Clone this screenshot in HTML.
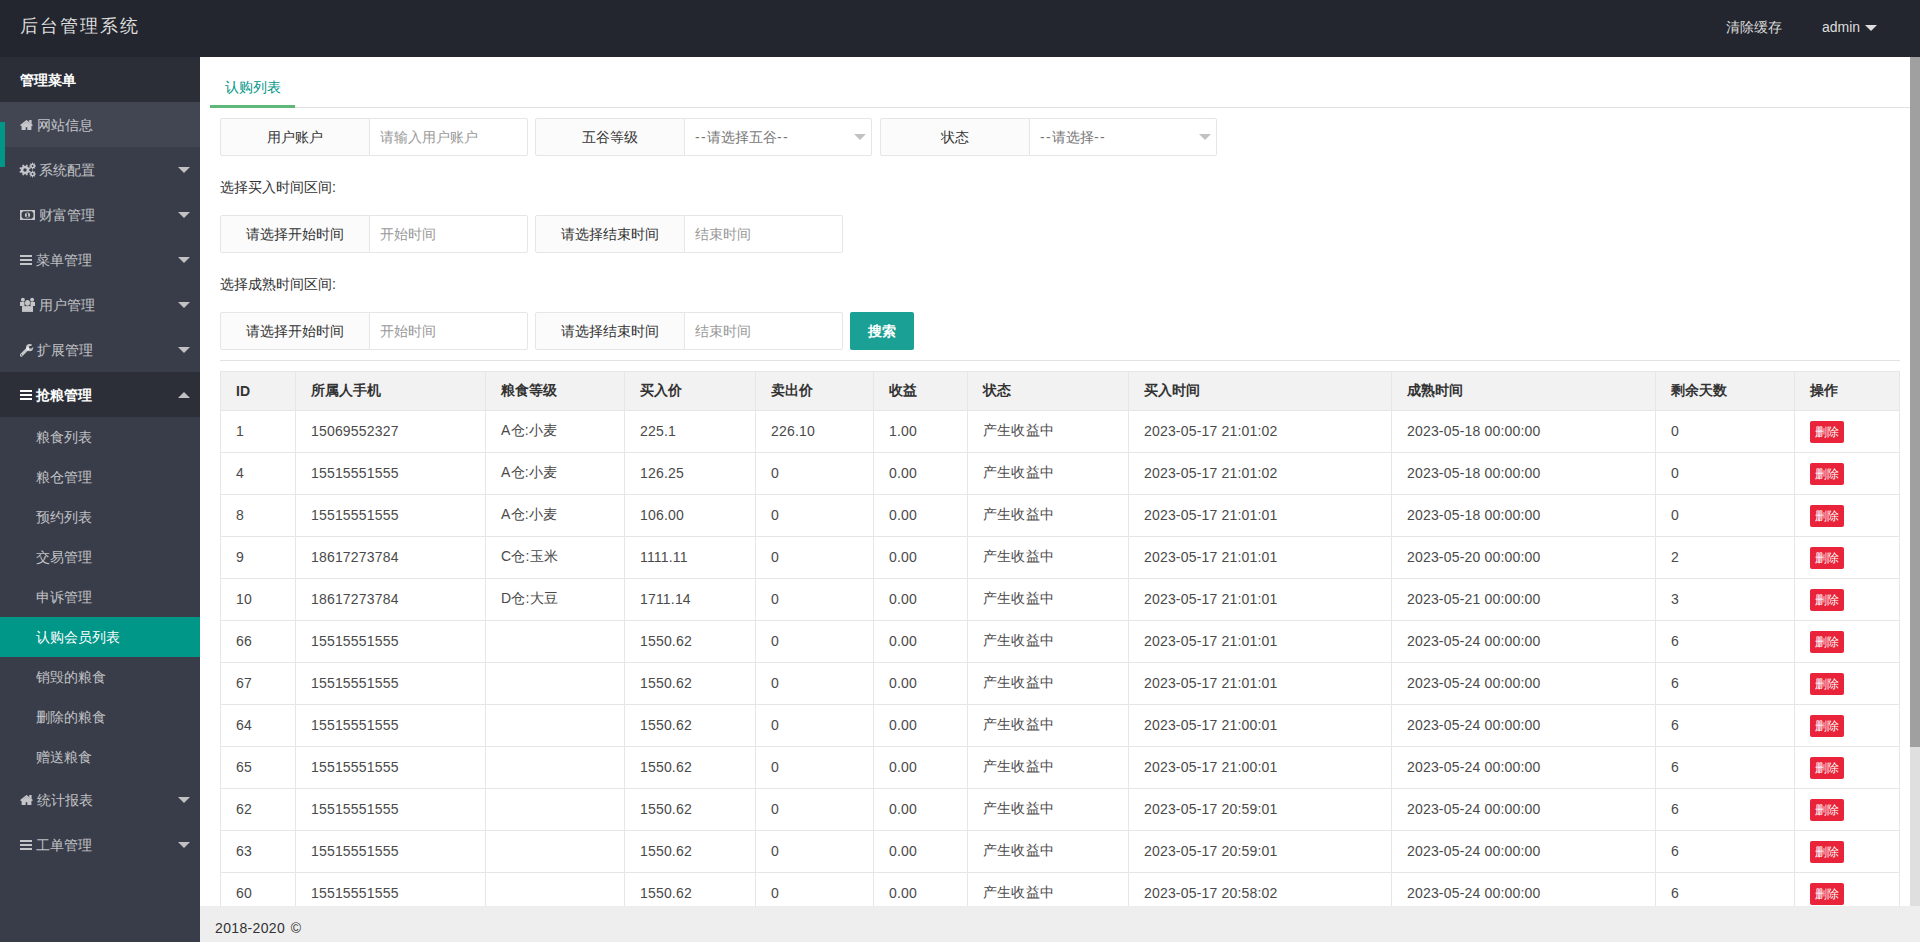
<!DOCTYPE html>
<html><head><meta charset="utf-8"><title>后台管理系统</title>
<style>
*{margin:0;padding:0;box-sizing:border-box}
html,body{width:1920px;height:942px;overflow:hidden;background:#fff;font-family:"Liberation Sans",sans-serif;font-size:14px;color:#333}
.hdr{position:absolute;left:0;top:0;width:1920px;height:57px;background:#23262E}
.logo{position:absolute;left:20px;top:14px;font-size:18px;letter-spacing:2px;color:#ddd;line-height:24px;white-space:nowrap}
.hr1{position:absolute;left:1726px;top:17px;color:#ddd;line-height:20px}
.hr2{position:absolute;left:1822px;top:17px;color:#ddd;line-height:20px}
.tri{position:absolute;width:0;height:0;border-style:solid;border-width:6px 6px 0 6px;border-color:#c2c2c2 transparent transparent transparent}
.side{position:absolute;left:0;top:57px;width:200px;height:885px;background:#393D49}
.st{position:absolute;line-height:20px;color:rgba(255,255,255,.7);white-space:nowrap}
.sidec{position:absolute;left:0;top:0;width:200px;height:942px}
.side .it{position:absolute;left:0;width:199px;height:45px;line-height:45px;color:rgba(255,255,255,.7);padding-left:20px;white-space:nowrap}
.side .ch{position:absolute;left:0;width:199px;height:40px;line-height:40px;color:rgba(255,255,255,.7);padding-left:36px;white-space:nowrap}
.side .ic{display:inline-block;width:16px;vertical-align:middle}
.main{position:absolute;left:200px;top:57px;width:1710px;height:849px;background:#fff}
.foot{position:absolute;left:200px;top:906px;width:1720px;height:36px;background:#eee}
.sb{position:absolute;left:1910px;top:57px;width:10px;height:849px;background:#dfdfdf}
.sbt{position:absolute;left:1910px;top:57px;width:10px;height:690px;background:#a0a0a0}
.fl{position:absolute;height:38px;border:1px solid #e6e6e6;background:#FBFBFB;text-align:center;line-height:36px;color:#333;border-radius:2px 0 0 2px}
.fi{position:absolute;height:38px;border:1px solid #e6e6e6;background:#fff;line-height:36px;color:#999;padding-left:10px;border-radius:0 2px 2px 0}
.ds{letter-spacing:1.3px}
.lbl{position:absolute;left:220px;line-height:20px;color:#333}
.tbl{position:absolute;left:0;top:0;width:1910px;height:906px;overflow:hidden}
.mainc{position:absolute;left:0;top:0;width:1920px;height:942px;white-space:nowrap}
table{position:absolute;left:220px;top:371px;border-collapse:collapse;table-layout:fixed}
td,th{border:1px solid #e6e6e6;padding:0 15px;text-align:left;white-space:nowrap;overflow:hidden}
th{height:39px;background:#f2f2f2;font-weight:bold;color:#333}
td{height:42px;color:#4a4a4a;padding-bottom:1px;letter-spacing:0.18px}
.del{display:inline-block;width:34px;height:22px;line-height:22px;background:#E8233A;color:#fff;font-size:12px;text-align:center;border-radius:2px;vertical-align:middle;position:relative;top:1px;letter-spacing:0}
</style></head><body>
<div class="hdr">
  <div class="logo">后台管理系统</div>
  <div class="hr1">清除缓存</div>
  <div class="hr2">admin</div>
  <div class="tri" style="left:1865px;top:25px;border-top-color:#ddd"></div>
</div>
<div class="side"></div>
<div class="sidec">
<div style="position:absolute;left:0;top:57px;width:200px;height:45px;background:#2B2E37"></div>
<div class="st" style="left:20px;top:70px;color:#fff;font-weight:bold">管理菜单</div>
<div style="position:absolute;left:0;top:102px;width:200px;height:45px;background:#424653"></div>
<div style="position:absolute;left:0;top:122px;width:5px;height:45px;background:#009688"></div>
<svg style="position:absolute;left:20px;top:120px" width="13" height="10" viewBox="0 0 13 10"><path d="M0.6 5.6 L6.5 0.9 L12.4 5.6" fill="none" stroke="rgba(255,255,255,.7)" stroke-width="1.5"/><path d="M9.2 0 L11.6 0 L11.6 3.9 L9.2 2 Z" fill="rgba(255,255,255,.7)"/><path d="M1.6 5.6 L6.5 1.9 L11.4 5.6 L11.4 10 L7.3 10 L7.3 7.2 L5.7 7.2 L5.7 10 L1.6 10 Z" fill="rgba(255,255,255,.7)"/></svg>
<div class="st" style="left:37px;top:115px">网站信息</div>
<svg style="position:absolute;left:19px;top:162px" width="17" height="16" viewBox="0 0 17 16"><path fill-rule="evenodd" d="M10.22 8.84 L11.58 9.57 L11.06 10.83 L9.58 10.39 L8.39 11.58 L8.83 13.06 L7.57 13.58 L6.84 12.22 L5.16 12.22 L4.43 13.58 L3.17 13.06 L3.61 11.58 L2.42 10.39 L0.94 10.83 L0.42 9.57 L1.78 8.84 L1.78 7.16 L0.42 6.43 L0.94 5.17 L2.42 5.61 L3.61 4.42 L3.17 2.94 L4.43 2.42 L5.16 3.78 L6.84 3.78 L7.57 2.42 L8.83 2.94 L8.39 4.42 L9.58 5.61 L11.06 5.17 L11.58 6.43 L10.22 7.16 Z M4.30 8.00 A1.7 1.7 0 1 0 7.70 8.00 A1.7 1.7 0 1 0 4.30 8.00 Z M16.05 3.51 L16.98 3.60 L16.98 4.40 L16.05 4.49 L15.68 5.39 L16.27 6.10 L15.70 6.67 L14.99 6.08 L14.09 6.45 L14.00 7.38 L13.20 7.38 L13.11 6.45 L12.21 6.08 L11.50 6.67 L10.93 6.10 L11.52 5.39 L11.15 4.49 L10.22 4.40 L10.22 3.60 L11.15 3.51 L11.52 2.61 L10.93 1.90 L11.50 1.33 L12.21 1.92 L13.11 1.55 L13.20 0.62 L14.00 0.62 L14.09 1.55 L14.99 1.92 L15.70 1.33 L16.27 1.90 L15.68 2.61 Z M12.70 4.00 A0.9 0.9 0 1 0 14.50 4.00 A0.9 0.9 0 1 0 12.70 4.00 Z M16.05 11.51 L16.98 11.60 L16.98 12.40 L16.05 12.49 L15.68 13.39 L16.27 14.10 L15.70 14.67 L14.99 14.08 L14.09 14.45 L14.00 15.38 L13.20 15.38 L13.11 14.45 L12.21 14.08 L11.50 14.67 L10.93 14.10 L11.52 13.39 L11.15 12.49 L10.22 12.40 L10.22 11.60 L11.15 11.51 L11.52 10.61 L10.93 9.90 L11.50 9.33 L12.21 9.92 L13.11 9.55 L13.20 8.62 L14.00 8.62 L14.09 9.55 L14.99 9.92 L15.70 9.33 L16.27 9.90 L15.68 10.61 Z M12.70 12.00 A0.9 0.9 0 1 0 14.50 12.00 A0.9 0.9 0 1 0 12.70 12.00 Z" fill="rgba(255,255,255,.7)"/></svg>
<div class="st" style="left:39px;top:160px">系统配置</div>
<div style="position:absolute;left:178px;top:167px;width:0;height:0;border-style:solid;border-width:6px 6px 0 6px;border-color:#c2c2c2 transparent transparent transparent"></div>
<svg style="position:absolute;left:20px;top:210px" width="15" height="10" viewBox="0 0 15 10"><path fill-rule="evenodd" d="M0 0 L15 0 L15 10 L0 10 Z M1.6 3 L3.3 1.3 L11.7 1.3 L13.4 3 L13.4 7 L11.7 8.7 L3.3 8.7 L1.6 7 Z" fill="rgba(255,255,255,.7)"/><path d="M4.90 5.00 A2.6 2.6 0 1 0 10.10 5.00 A2.6 2.6 0 1 0 4.90 5.00 Z" fill="rgba(255,255,255,.7)"/><path d="M6.8 3.3 L8.1 3.3 L8.1 6.4 L8.9 6.4 L8.9 7.2 L6.2 7.2 L6.2 6.4 L6.9 6.4 L6.9 4.3 L6.3 4.5 L6.3 3.8 Z" fill="#393D49"/></svg>
<div class="st" style="left:39px;top:205px">财富管理</div>
<div style="position:absolute;left:178px;top:212px;width:0;height:0;border-style:solid;border-width:6px 6px 0 6px;border-color:#c2c2c2 transparent transparent transparent"></div>
<svg style="position:absolute;left:20px;top:255px" width="12" height="10" viewBox="0 0 12 10"><rect x="0" y="0" width="12" height="2" fill="rgba(255,255,255,.7)"/><rect x="0" y="4" width="12" height="2" fill="rgba(255,255,255,.7)"/><rect x="0" y="8" width="12" height="2" fill="rgba(255,255,255,.7)"/></svg>
<div class="st" style="left:36px;top:250px">菜单管理</div>
<div style="position:absolute;left:178px;top:257px;width:0;height:0;border-style:solid;border-width:6px 6px 0 6px;border-color:#c2c2c2 transparent transparent transparent"></div>
<svg style="position:absolute;left:20px;top:297px" width="15" height="15" viewBox="0 0 15 15"><g fill="rgba(255,255,255,.7)"><path d="M0.90 2.70 A2 2 0 1 0 4.90 2.70 A2 2 0 1 0 0.90 2.70 Z M10.10 2.70 A2 2 0 1 0 14.10 2.70 A2 2 0 1 0 10.10 2.70 Z"/><ellipse cx="7.5" cy="5.8" rx="2.5" ry="2.9"/><rect x="0" y="5" width="4.5" height="4"/><rect x="10.5" y="5" width="4.5" height="4"/><rect x="2" y="9.1" width="11" height="5.8"/></g></svg>
<div class="st" style="left:39px;top:295px">用户管理</div>
<div style="position:absolute;left:178px;top:302px;width:0;height:0;border-style:solid;border-width:6px 6px 0 6px;border-color:#c2c2c2 transparent transparent transparent"></div>
<svg style="position:absolute;left:20px;top:343px" width="14" height="14" viewBox="0 0 14 14"><path d="M6.00 4.60 A3.6 3.6 0 1 0 13.20 4.60 A3.6 3.6 0 1 0 6.00 4.60 Z" fill="rgba(255,255,255,.7)"/><path d="M7.8 5.6 L1.3 12.1" stroke="rgba(255,255,255,.7)" stroke-width="2.9" stroke-linecap="round"/><path d="M9.6 4.2 L13.6 0.8 L14 3.4 L11.2 5.6 Z" fill="#393D49"/><circle cx="10.3" cy="4.3" r="1.3" fill="#393D49"/><circle cx="1.6" cy="11.9" r="0.55" fill="#393D49"/></svg>
<div class="st" style="left:37px;top:340px">扩展管理</div>
<div style="position:absolute;left:178px;top:347px;width:0;height:0;border-style:solid;border-width:6px 6px 0 6px;border-color:#c2c2c2 transparent transparent transparent"></div>
<div style="position:absolute;left:0;top:372px;width:200px;height:45px;background:#2C2F37"></div>
<svg style="position:absolute;left:20px;top:390px" width="12" height="10" viewBox="0 0 12 10"><rect x="0" y="0" width="12" height="2" fill="#fff"/><rect x="0" y="4" width="12" height="2" fill="#fff"/><rect x="0" y="8" width="12" height="2" fill="#fff"/></svg>
<div class="st" style="left:36px;top:385px;color:#fff;font-weight:bold">抢粮管理</div>
<div style="position:absolute;left:178px;top:392px;width:0;height:0;border-style:solid;border-width:0 6px 6px 6px;border-color:transparent transparent #c2c2c2 transparent"></div>
<div class="st" style="left:36px;top:427px">粮食列表</div>
<div class="st" style="left:36px;top:467px">粮仓管理</div>
<div class="st" style="left:36px;top:507px">预约列表</div>
<div class="st" style="left:36px;top:547px">交易管理</div>
<div class="st" style="left:36px;top:587px">申诉管理</div>
<div style="position:absolute;left:0;top:617px;width:200px;height:40px;background:#009688"></div>
<div class="st" style="left:36px;top:627px;color:#fff">认购会员列表</div>
<div class="st" style="left:36px;top:667px">销毁的粮食</div>
<div class="st" style="left:36px;top:707px">删除的粮食</div>
<div class="st" style="left:36px;top:747px">赠送粮食</div>
<svg style="position:absolute;left:20px;top:795px" width="13" height="10" viewBox="0 0 13 10"><path d="M0.6 5.6 L6.5 0.9 L12.4 5.6" fill="none" stroke="rgba(255,255,255,.7)" stroke-width="1.5"/><path d="M9.2 0 L11.6 0 L11.6 3.9 L9.2 2 Z" fill="rgba(255,255,255,.7)"/><path d="M1.6 5.6 L6.5 1.9 L11.4 5.6 L11.4 10 L7.3 10 L7.3 7.2 L5.7 7.2 L5.7 10 L1.6 10 Z" fill="rgba(255,255,255,.7)"/></svg>
<div class="st" style="left:37px;top:790px">统计报表</div>
<div style="position:absolute;left:178px;top:797px;width:0;height:0;border-style:solid;border-width:6px 6px 0 6px;border-color:#c2c2c2 transparent transparent transparent"></div>
<svg style="position:absolute;left:20px;top:840px" width="12" height="10" viewBox="0 0 12 10"><rect x="0" y="0" width="12" height="2" fill="rgba(255,255,255,.7)"/><rect x="0" y="4" width="12" height="2" fill="rgba(255,255,255,.7)"/><rect x="0" y="8" width="12" height="2" fill="rgba(255,255,255,.7)"/></svg>
<div class="st" style="left:36px;top:835px">工单管理</div>
<div style="position:absolute;left:178px;top:842px;width:0;height:0;border-style:solid;border-width:6px 6px 0 6px;border-color:#c2c2c2 transparent transparent transparent"></div>
</div>
<div class="main"></div>
<div class="sb"></div><div class="sbt"></div>
<div class="foot"></div>
<div class="mainc">
<div style="position:absolute;left:225px;top:77px;line-height:20px;color:#009688">认购列表</div>
<div style="position:absolute;left:210px;top:107px;width:1700px;height:1px;background:#e2e2e2"></div>
<div style="position:absolute;left:210px;top:105px;width:85px;height:3px;background:#5FB878"></div>
<div class="fl" style="left:220px;top:118px;width:150px">用户账户</div><div class="fi" style="left:369px;top:118px;width:159px">请输入用户账户</div>
<div class="fl" style="left:535px;top:118px;width:150px">五谷等级</div><div class="fi" style="left:684px;top:118px;width:188px;color:#777"><span class="ds">--</span>请选择五谷<span class="ds">--</span></div><div class="tri" style="left:854px;top:134px"></div>
<div class="fl" style="left:880px;top:118px;width:150px">状态</div><div class="fi" style="left:1029px;top:118px;width:188px;color:#777"><span class="ds">--</span>请选择<span class="ds">--</span></div><div class="tri" style="left:1199px;top:134px"></div>
<div class="lbl" style="top:177px">选择买入时间区间:</div>
<div class="fl" style="left:220px;top:215px;width:150px">请选择开始时间</div><div class="fi" style="left:369px;top:215px;width:159px">开始时间</div>
<div class="fl" style="left:535px;top:215px;width:150px">请选择结束时间</div><div class="fi" style="left:684px;top:215px;width:159px">结束时间</div>
<div class="lbl" style="top:274px">选择成熟时间区间:</div>
<div class="fl" style="left:220px;top:312px;width:150px">请选择开始时间</div><div class="fi" style="left:369px;top:312px;width:159px">开始时间</div>
<div class="fl" style="left:535px;top:312px;width:150px">请选择结束时间</div><div class="fi" style="left:684px;top:312px;width:159px">结束时间</div>
<div style="position:absolute;left:850px;top:312px;width:64px;height:38px;line-height:38px;background:#1AA094;color:#fff;text-align:center;border-radius:2px;font-weight:bold">搜索</div>
<div style="position:absolute;left:220px;top:360px;width:1680px;height:1px;background:#e2e2e2"></div>
<div class="tbl"><table>
<colgroup><col style="width:75px"><col style="width:190px"><col style="width:139px"><col style="width:131px"><col style="width:118px"><col style="width:94px"><col style="width:161px"><col style="width:263px"><col style="width:264px"><col style="width:139px"><col style="width:105px"></colgroup>
<tr><th>ID</th><th>所属人手机</th><th>粮食等级</th><th>买入价</th><th>卖出价</th><th>收益</th><th>状态</th><th>买入时间</th><th>成熟时间</th><th>剩余天数</th><th>操作</th></tr>
<tr><td>1</td><td>15069552327</td><td>A仓:小麦</td><td>225.1</td><td>226.10</td><td>1.00</td><td>产生收益中</td><td>2023-05-17 21:01:02</td><td>2023-05-18 00:00:00</td><td>0</td><td><span class="del">删除</span></td></tr>
<tr><td>4</td><td>15515551555</td><td>A仓:小麦</td><td>126.25</td><td>0</td><td>0.00</td><td>产生收益中</td><td>2023-05-17 21:01:02</td><td>2023-05-18 00:00:00</td><td>0</td><td><span class="del">删除</span></td></tr>
<tr><td>8</td><td>15515551555</td><td>A仓:小麦</td><td>106.00</td><td>0</td><td>0.00</td><td>产生收益中</td><td>2023-05-17 21:01:01</td><td>2023-05-18 00:00:00</td><td>0</td><td><span class="del">删除</span></td></tr>
<tr><td>9</td><td>18617273784</td><td>C仓:玉米</td><td>1111.11</td><td>0</td><td>0.00</td><td>产生收益中</td><td>2023-05-17 21:01:01</td><td>2023-05-20 00:00:00</td><td>2</td><td><span class="del">删除</span></td></tr>
<tr><td>10</td><td>18617273784</td><td>D仓:大豆</td><td>1711.14</td><td>0</td><td>0.00</td><td>产生收益中</td><td>2023-05-17 21:01:01</td><td>2023-05-21 00:00:00</td><td>3</td><td><span class="del">删除</span></td></tr>
<tr><td>66</td><td>15515551555</td><td></td><td>1550.62</td><td>0</td><td>0.00</td><td>产生收益中</td><td>2023-05-17 21:01:01</td><td>2023-05-24 00:00:00</td><td>6</td><td><span class="del">删除</span></td></tr>
<tr><td>67</td><td>15515551555</td><td></td><td>1550.62</td><td>0</td><td>0.00</td><td>产生收益中</td><td>2023-05-17 21:01:01</td><td>2023-05-24 00:00:00</td><td>6</td><td><span class="del">删除</span></td></tr>
<tr><td>64</td><td>15515551555</td><td></td><td>1550.62</td><td>0</td><td>0.00</td><td>产生收益中</td><td>2023-05-17 21:00:01</td><td>2023-05-24 00:00:00</td><td>6</td><td><span class="del">删除</span></td></tr>
<tr><td>65</td><td>15515551555</td><td></td><td>1550.62</td><td>0</td><td>0.00</td><td>产生收益中</td><td>2023-05-17 21:00:01</td><td>2023-05-24 00:00:00</td><td>6</td><td><span class="del">删除</span></td></tr>
<tr><td>62</td><td>15515551555</td><td></td><td>1550.62</td><td>0</td><td>0.00</td><td>产生收益中</td><td>2023-05-17 20:59:01</td><td>2023-05-24 00:00:00</td><td>6</td><td><span class="del">删除</span></td></tr>
<tr><td>63</td><td>15515551555</td><td></td><td>1550.62</td><td>0</td><td>0.00</td><td>产生收益中</td><td>2023-05-17 20:59:01</td><td>2023-05-24 00:00:00</td><td>6</td><td><span class="del">删除</span></td></tr>
<tr><td>60</td><td>15515551555</td><td></td><td>1550.62</td><td>0</td><td>0.00</td><td>产生收益中</td><td>2023-05-17 20:58:02</td><td>2023-05-24 00:00:00</td><td>6</td><td><span class="del">删除</span></td></tr>
<tr><td>61</td><td>15515551555</td><td></td><td>1550.62</td><td>0</td><td>0.00</td><td>产生收益中</td><td>2023-05-17 20:58:02</td><td>2023-05-24 00:00:00</td><td>6</td><td><span class="del">删除</span></td></tr>
</table></div>
<div style="position:absolute;left:215px;top:918px;line-height:20px;color:#333;letter-spacing:0.35px;word-spacing:1.5px">2018-2020 ©</div>
</div>
</body></html>
